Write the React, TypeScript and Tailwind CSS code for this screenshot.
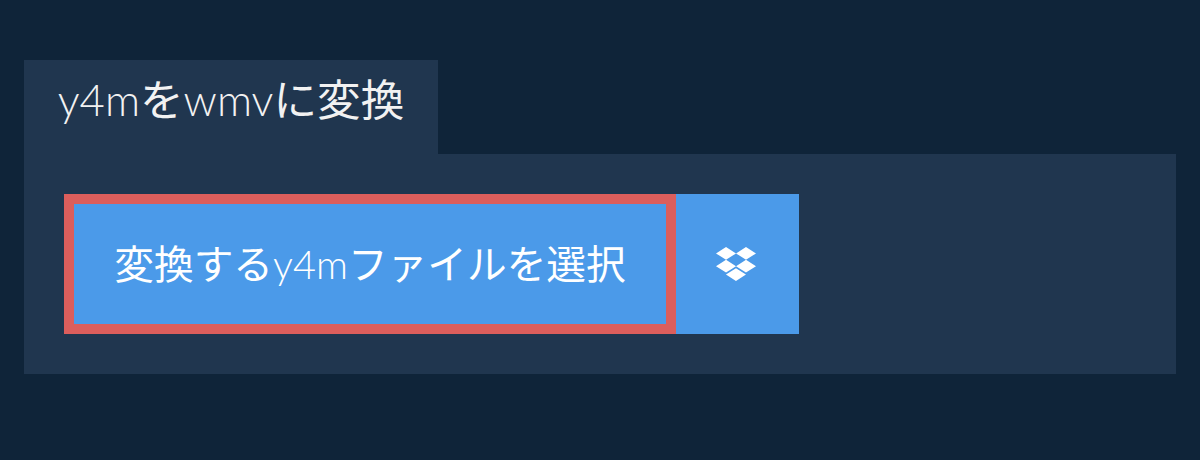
import { FaDropbox } from "react-icons/fa";

export default function App() {
  return (
    <div className="h-[460px] w-[1200px] bg-[#0f2439] px-6 pt-[60px] font-['Lato','Noto_Sans_CJK_JP',sans-serif]">
      <div className="flex h-[94px] w-[414px] items-center justify-center bg-[#20364f] pb-[14px] text-[43.6px] font-light text-[#f2f2f2]">
        <span>y4m</span><span className="font-normal">を</span><span>wmv</span><span className="font-normal">に変換</span>
      </div>
      <div className="flex h-[220px] bg-[#20364f] p-10">
        <button className="h-[140px] w-[612px] border-[10px] border-[#dc5e5c] bg-[#4b9ae9] text-[39.7px] text-white">
          <span>変換する</span><span className="font-light">y4m</span><span>ファイルを選択</span>
        </button>
        <button className="flex h-[140px] w-[123px] items-center justify-center bg-[#4b9ae9] pr-[3px] text-white">
          <FaDropbox className="text-[40px]" />
        </button>
      </div>
    </div>
  );
}
